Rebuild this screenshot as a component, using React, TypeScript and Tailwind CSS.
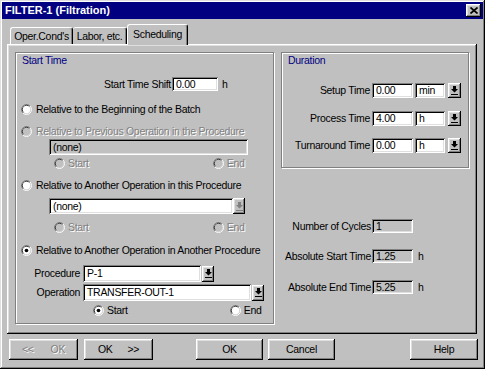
import React from "react";

const raised =
  "shadow-[inset_-1px_-1px_#000,inset_1px_1px_#fff,inset_-2px_-2px_#808080,inset_2px_2px_#dfdfdf]";
const sunken =
  "shadow-[inset_1px_1px_#808080,inset_-1px_-1px_#fff,inset_2px_2px_#000,inset_-2px_-2px_#dfdfdf]";
const etched = "border border-[#808080] shadow-[inset_1px_1px_#fff,1px_1px_#fff]";
const grayText = "text-[#808080] [text-shadow:1px_1px_0_#fff]";

function Field({ className, value = "", disabled = false }: { className: string; value?: string; disabled?: boolean }) {
  return (
    <div className={`${sunken} ${disabled ? "bg-[#c0c0c0]" : "bg-white"} flex shrink-0 items-center pl-[4px] ${className}`}>
      {value}
    </div>
  );
}

function Radio({ checked = false, disabled = false }: { checked?: boolean; disabled?: boolean }) {
  return (
    <svg width="11" height="11" viewBox="0 0 12 12" className="shrink-0">
      <path d="M2.11 9.89A5.5 5.5 0 0 1 9.89 2.11" fill="none" stroke="#808080" />
      <path d="M9.89 2.11A5.5 5.5 0 0 1 2.11 9.89" fill="none" stroke="#fff" />
      <path d="M2.82 9.18A4.5 4.5 0 0 1 9.18 2.82" fill="none" stroke="#000" />
      <path d="M9.18 2.82A4.5 4.5 0 0 1 2.82 9.18" fill="none" stroke="#dfdfdf" />
      <circle cx="6" cy="6" r="4" fill={disabled ? "#c0c0c0" : "#fff"} />
      {checked && <circle cx="6" cy="6" r="2" fill="#000" />}
    </svg>
  );
}

function ArrowBtn({ className, disabled = false }: { className: string; disabled?: boolean }) {
  const c = disabled ? "#808080" : "#000";
  return (
    <div className={`${raised} bg-[#c0c0c0] flex shrink-0 items-center justify-center ${className}`}>
      <svg width="7" height="9" viewBox="0 0 7 9">
        <path d="M2 0H5V3H7L3.5 6.5L0 3H2Z" fill={c} />
        <rect y="8" width="7" height="1" fill={c} />
      </svg>
    </div>
  );
}

function RadioRow({ label, checked, disabled, className }: { label: string; checked?: boolean; disabled?: boolean; className: string }) {
  return (
    <div className={`flex h-[14px] items-center ${className}`}>
      <Radio checked={checked} disabled={disabled} />
      <span className={`ml-[4px] whitespace-nowrap ${disabled ? grayText : ""}`}>{label}</span>
    </div>
  );
}

function SubRadios({ disabled, startChecked, className, endGap }: { disabled?: boolean; startChecked?: boolean; className: string; endGap: string }) {
  return (
    <div className={`flex h-[14px] items-center ${className}`}>
      <Radio disabled={disabled} checked={startChecked} />
      <span className={`ml-[3px] ${disabled ? grayText : ""}`}>Start</span>
      <div className={endGap} />
      <Radio disabled={disabled} />
      <span className={`ml-[3px] ${disabled ? grayText : ""}`}>End</span>
    </div>
  );
}

function DurRow({ label, value, unit, className }: { label: string; value: string; unit: string; className: string }) {
  return (
    <div className={`flex h-[15px] items-center ${className}`}>
      <span className="w-[88px] whitespace-nowrap text-right">{label}</span>
      <Field className="ml-[2px] h-[15px] w-[41px]" value={value} />
      <Field className="ml-[2px] h-[15px] w-[30px]" value={unit} />
      <ArrowBtn className="ml-[3px] h-[15px] w-[13px]" />
    </div>
  );
}

function InfoRow({ label, value, unit, className }: { label: string; value: string; unit?: string; className: string }) {
  return (
    <div className={`flex h-[14px] items-center ${className}`}>
      <span className="w-[90px] whitespace-nowrap text-right">{label}</span>
      <Field className="ml-[1px] h-[14px] w-[41px]" value={value} disabled />
      {unit && <span className="ml-[5px]">{unit}</span>}
    </div>
  );
}

function Button({ children, className, disabled = false }: { children: React.ReactNode; className: string; disabled?: boolean }) {
  return (
    <div className={`${raised} flex h-[21px] shrink-0 items-center justify-center bg-[#c0c0c0] ${disabled ? grayText : ""} ${className}`}>
      {children}
    </div>
  );
}

export default function App() {
  return (
    <div className="flex h-[369px] w-[485px] flex-col bg-[#c0c0c0] p-[2px] font-['Liberation_Sans',Arial,sans-serif] text-[10.5px] leading-none tracking-[-0.3px] text-black shadow-[inset_-1px_-1px_#000,inset_1px_1px_#dfdfdf,inset_-2px_-2px_#808080,inset_2px_2px_#fff]">
      {/* title bar */}
      <div className="flex h-[17px] shrink-0 items-center justify-between bg-[#000080] pl-[3px] pr-[2px]">
        <span className="text-[11px] font-bold tracking-normal text-white">FILTER-1 (Filtration)</span>
        <div className={`${raised} flex h-[13px] w-[15px] items-center justify-center bg-[#c0c0c0]`}>
          <svg width="8" height="7" viewBox="0 0 8 7">
            <path d="M0.5 0.5L7.5 6.5M7.5 0.5L0.5 6.5" stroke="#000" strokeWidth="1.7" />
          </svg>
        </div>
      </div>

      <div className="ml-[5px] mr-[6px] mt-[5px] flex flex-col">
        {/* tabs */}
        <div className="flex h-[20px] items-end pl-[3px]">
          <div className="flex h-[17px] w-[63px] items-center justify-center rounded-t-[3px] border-l border-r border-t border-l-white border-r-black border-t-white shadow-[inset_-1px_0_#808080]">
            Oper.Cond's
          </div>
          <div className="flex h-[17px] w-[54px] items-center justify-center rounded-t-[3px] border-r border-t border-r-black border-t-white shadow-[inset_-1px_0_#808080]">
            Labor, etc.
          </div>
          <div className="relative z-10 -mb-px flex h-[21px] w-[61px] items-center justify-center rounded-t-[3px] border-l border-r border-t border-l-white border-r-black border-t-white bg-[#c0c0c0] pb-[2px] shadow-[inset_-1px_0_#808080]">
            Scheduling
          </div>
        </div>

        {/* tab panel */}
        <div className={`${raised} flex h-[290px] gap-[7px] p-[8px]`}>
          {/* Start Time group */}
          <div className={`${etched} flex h-[272px] w-[259px] shrink-0 flex-col`}>
            <div className="ml-[6px] mt-[1px] flex h-[13px] items-center text-[#000080]">Start Time</div>

            <div className="mt-[10px] flex h-[14px] items-center">
              <span className="w-[155px] whitespace-nowrap text-right">Start Time Shift</span>
              <Field className="ml-px h-[14px] w-[46px]" value="0.00" />
              <span className="ml-[4px]">h</span>
            </div>

            <RadioRow className="ml-[5px] mt-[11px]" label="Relative to the Beginning of the Batch" />
            <RadioRow className="ml-[5px] mt-[8px]" label="Relative to Previous Operation in the Procedure" disabled />
            <Field className="ml-[33px] mt-px h-[16px] w-[199px]" value="(none)" disabled />
            <SubRadios className="ml-[38px] mt-px" disabled endGap="w-[124px]" />

            <RadioRow className="ml-[5px] mt-[8px]" label="Relative to Another Operation in this Procedure" />
            <div className="ml-[33px] mt-[6px] flex">
              <Field className="h-[16px] w-[184px]" value="(none)" />
              <ArrowBtn className="h-[16px] w-[12px]" disabled />
            </div>
            <SubRadios className="ml-[38px] mt-[6px]" disabled endGap="w-[124px]" />

            <RadioRow className="ml-[5px] mt-[9px]" label="Relative to Another Operation in Another Procedure" checked />
            <div className="mt-[8px] flex h-[17px] items-center">
              <span className="w-[64px] text-right">Procedure</span>
              <Field className="ml-[3px] h-[17px] w-[118px]" value="P-1" />
              <ArrowBtn className="ml-px h-[16px] w-[12px]" />
            </div>
            <div className="mt-[2px] flex h-[17px] items-center">
              <span className="w-[64px] text-right">Operation</span>
              <Field className="ml-[3px] h-[17px] w-[168px]" value="TRANSFER-OUT-1" />
              <ArrowBtn className="ml-px h-[16px] w-[12px]" />
            </div>
            <SubRadios className="ml-[77px] mt-[2px]" startChecked endGap="w-[102px]" />
          </div>

          {/* right column */}
          <div className="flex w-[188px] flex-col">
            <div className={`${etched} flex h-[116px] flex-col`}>
              <div className="ml-[6px] mt-[1px] flex h-[13px] items-center text-[#000080]">Duration</div>
              <DurRow className="mt-[16px]" label="Setup Time" value="0.00" unit="min" />
              <DurRow className="mt-[13px]" label="Process Time" value="4.00" unit="h" />
              <DurRow className="mt-[12px]" label="Turnaround Time" value="0.00" unit="h" />
            </div>
            <InfoRow className="mt-[51px]" label="Number of Cycles" value="1" />
            <InfoRow className="mt-[16px]" label="Absolute Start Time" value="1.25" unit="h" />
            <InfoRow className="mt-[17px]" label="Absolute End Time" value="5.25" unit="h" />
          </div>
        </div>
      </div>

      {/* buttons */}
      <div className="mt-[5px] flex">
        <Button className="ml-[7px] w-[69px] gap-[17px]" disabled>
          <span>&lt;&lt;</span>
          <span>OK</span>
        </Button>
        <Button className="ml-[6px] w-[69px] gap-[15px]">
          <span>OK</span>
          <span>&gt;&gt;</span>
        </Button>
        <Button className="ml-[43px] w-[67px]">OK</Button>
        <Button className="ml-[5px] w-[67px]">Cancel</Button>
        <Button className="ml-[75px] w-[68px]">Help</Button>
      </div>
    </div>
  );
}
